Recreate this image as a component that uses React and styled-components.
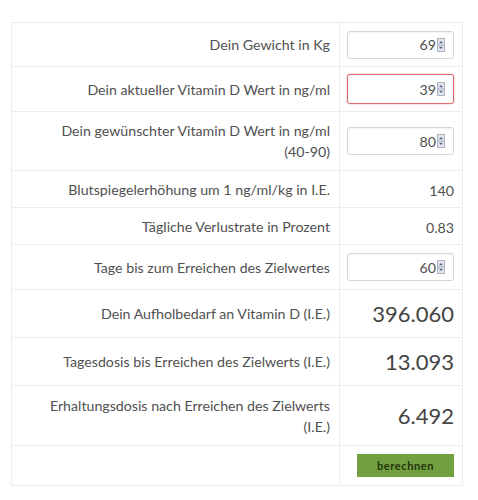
import React from 'react';
import styled, { createGlobalStyle } from 'styled-components';

const Global = createGlobalStyle`
    body {
        margin: 0;
        background: #fff;
        font-family: Lato, "Open Sans", sans-serif;
        color: #505050;
    }
`;

const rows = [
    { label: 'Dein Gewicht in Kg', input: '69', h: 44 },
    { label: 'Dein aktueller Vitamin D Wert in ng/ml', input: '39', h: 45, invalid: true },
    { label: 'Dein gewünschter Vitamin D Wert in ng/ml (40-90)', input: '80', h: 59 },
    { label: 'Blutspiegelerhöhung um 1 ng/ml/kg in I.E.', value: '140', h: 37 },
    { label: 'Tägliche Verlustrate in Prozent', value: '0.83', h: 37 },
    { label: 'Tage bis zum Erreichen des Zielwertes', input: '60', h: 45 },
    { label: 'Dein Aufholbedarf an Vitamin D (I.E.)', big: '396.060', h: 48 },
    { label: 'Tagesdosis bis Erreichen des Zielwerts (I.E.)', big: '13.093', h: 48 },
    { label: 'Erhaltungsdosis nach Erreichen des Zielwerts (I.E.)', big: '6.492', h: 60 },
];

function Spinner() {
    return (
        <svg width="8" height="14" viewBox="0 0 8 14">
            <rect x="0.5" y="0.5" width="7" height="13" fill="#dfe3ec" stroke="#aeb3c0" />
            <line x1="0.5" y1="7" x2="7.5" y2="7" stroke="#aeb3c0" />
            <path d="M2 5.2 L4 3 L6 5.2 Z" fill="#5c6384" />
            <path d="M2 8.8 L4 11 L6 8.8 Z" fill="#5c6384" />
        </svg>
    );
}

export default function App() {
    return (
        <>
            <Global />
            <Page>
                <Table>
                    <tbody>
                        {rows.map((r) => (
                            <Row key={r.label} $h={r.h}>
                                <Label>{r.label}</Label>
                                <Cell>
                                    {r.input && (
                                        <NumberBox $invalid={r.invalid}>
                                            <Field type="text" readOnly value={r.input} />
                                            <Spinner />
                                        </NumberBox>
                                    )}
                                    {r.value && <Value>{r.value}</Value>}
                                    {r.big && <Big>{r.big}</Big>}
                                </Cell>
                            </Row>
                        ))}
                        <Row $h={40}>
                            <Label></Label>
                            <Cell>
                                <Button>berechnen</Button>
                            </Cell>
                        </Row>
                    </tbody>
                </Table>
            </Page>
        </>
    );
}

const Page = styled.div`
    padding: 22px 0 0 11px;
`;
const Table = styled.table`
    width: 452px;
    border-collapse: collapse;
    border: 1px solid #ececec;
    table-layout: fixed;
`;
const Row = styled.tr`
    height: ${(p) => p.$h}px;
    border-bottom: 1px solid #ececec;
`;
const Label = styled.td`
    width: 328px;
    box-sizing: border-box;
    padding: 0 9px 0 27px;
    text-align: right;
    font-size: 14.2px;
    line-height: 21px;
    color: #505050;
    border-right: 1px solid #ececec;
    vertical-align: middle;
`;
const Cell = styled.td`
    padding: 0 8px 0 7px;
    text-align: right;
    vertical-align: middle;
`;
const NumberBox = styled.div`
    display: flex;
    align-items: center;
    height: ${(p) => (p.$invalid ? 30 : 28)}px;
    box-sizing: border-box;
    border: 1px solid ${(p) => (p.$invalid ? '#dd6a6a' : '#d6d6d6')};
    border-radius: 3px;
    box-shadow: ${(p) => (p.$invalid ? '0 0 2px rgba(221,80,80,0.5)' : 'inset 0 1px 1px rgba(0,0,0,0.05)')};
    padding: 0 8px 0 6px;
    background: #fff;
`;
const Field = styled.input`
    flex: 1;
    min-width: 0;
    border: none;
    outline: none;
    background: transparent;
    text-align: right;
    font-family: Lato, sans-serif;
    font-size: 14.2px;
    color: #505050;
    padding: 0 1px 0 0;
`;
const Value = styled.span`
    font-size: 14.2px;
    color: #505050;
`;
const Big = styled.span`
    font-size: 22px;
    color: #444;
`;
const Button = styled.button`
    width: 97px;
    height: 23px;
    border: none;
    background: #72a040;
    color: #22350a;
    font-family: Lato, sans-serif;
    font-weight: 700;
    font-size: 11px;
    letter-spacing: 0.6px;
    cursor: pointer;
`;
